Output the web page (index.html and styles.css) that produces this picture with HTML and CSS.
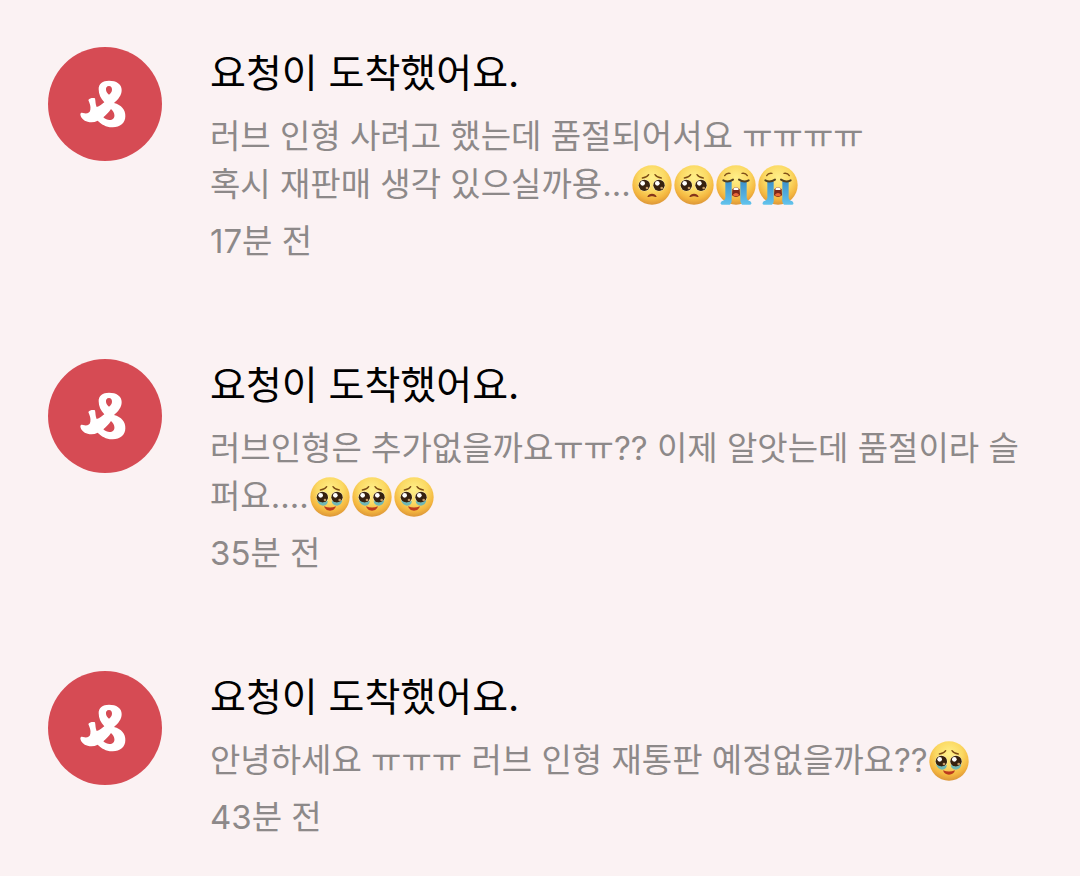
FILE: index.html
```html
<!DOCTYPE html>
<html lang="ko">
<head>
<meta charset="UTF-8">
<meta name="viewport" content="width=device-width, initial-scale=1.0">
<title>알림</title>
<link rel="stylesheet" href="styles.css">
</head>
<body>

<!-- Shared icons -->
<svg class="sprite" aria-hidden="true">
  <defs>
    <radialGradient id="face" cx="50%" cy="32%" r="68%">
      <stop offset="0" stop-color="#fff08a"/>
      <stop offset="0.5" stop-color="#fbd963"/>
      <stop offset="0.8" stop-color="#f4b63f"/>
      <stop offset="1" stop-color="#dc9638"/>
    </radialGradient>
    <linearGradient id="tear" x1="0" y1="0" x2="0" y2="1">
      <stop offset="0" stop-color="#3c91cb"/>
      <stop offset="1" stop-color="#62c3ec"/>
    </linearGradient>

    <symbol id="logo" viewBox="24 21 342 342">
      <path fill="#fff" fill-rule="evenodd" d="M176 148C175 131 188 122 207 122C229 122 245 132 245 150C245 166 235 178 222 189C244 195 257 209 256 229C256 250 239 263 216 262C198 261 184 253 173 242C163 247 153 248 143 245C131 243 121 232 121 222C123 216 129 219 133 220C143 221 150 218 151 209C153 199 149 190 145 180C150 174 158 173 165 175C167 184 166 193 170 201C178 199 187 192 193 187C182 175 176 163 176 148ZM207 138C200 138 197 144 198 150C199 156 203 161 207 164C212 160 216 155 216 149C216 143 213 138 207 138ZM213 207C206 217 198 225 190 232C198 239 207 242 215 239C227 235 226 218 213 207Z"/>
    </symbol>

    <g id="eyes">
      <circle cx="37" cy="61" r="18" fill="#fff5d0"/>
      <circle cx="81" cy="61" r="18" fill="#fff5d0"/>
      <circle cx="37" cy="61" r="17" fill="#36210f"/>
      <circle cx="81" cy="61" r="17" fill="#36210f"/>
      <circle cx="32" cy="55" r="7" fill="#fff"/>
      <circle cx="76" cy="55" r="7" fill="#fff"/>
      <circle cx="45" cy="69" r="4" fill="#c49a67"/>
      <circle cx="89" cy="69" r="4" fill="#c49a67"/>
      <path d="M31 39Q44 38 50 29M69 29Q75 38 88 39" fill="none" stroke="#7b4b14" stroke-width="4" stroke-linecap="round"/>
    </g>

    <symbol id="pleading" viewBox="0 0 120 120">
      <circle cx="60" cy="60" r="59" fill="url(#face)"/>
      <use href="#eyes"/>
      <path d="M46 95C50 83 70 83 74 95C70 98 65 94 60 94S50 98 46 95Z" fill="#85341a"/>
    </symbol>

    <symbol id="holding" viewBox="0 0 120 120">
      <circle cx="60" cy="60" r="59" fill="url(#face)"/>
      <use href="#eyes"/>
      <path d="M21 70Q37 82 53 71Q54 85 39 86Q25 85 21 70ZM65 71Q81 82 97 70Q95 85 81 86Q66 85 65 71Z" fill="#6fb7b5"/>
      <path d="M42 88Q60 95 78 88Q74 101 60 101Q46 101 42 88Z" fill="#bb391e"/>
    </symbol>

    <symbol id="sobbing" viewBox="0 0 120 120">
      <circle cx="60" cy="60" r="59" fill="url(#face)"/>
      <path d="M26 32Q31 23 42 25M78 25Q89 23 94 32" fill="none" stroke="#80501a" stroke-width="4" stroke-linecap="round"/>
      <path d="M28 49H47V102Q49 112 42 119H17Q10 117 17 109Q27 106 28 98ZM73 49H92V98Q93 106 103 109Q110 117 103 119H78Q71 112 73 102Z" fill="url(#tear)"/>
      <path d="M22 46Q36 54 51 44M69 44Q84 54 98 46" fill="none" stroke="#54401f" stroke-width="6" stroke-linecap="round"/>
      <path d="M49 73Q60 60 71 73L72 91Q60 101 48 91Z" fill="#7e2819"/>
      <path d="M52 71Q60 64 68 71L67 75H53Z" fill="#fff"/>
      <path d="M50 90Q60 78 70 90Q60 98 50 90Z" fill="#ec6a38"/>
    </symbol>
  </defs>
</svg>

<main>
  <ul class="notifications">
    <li class="notification">
      <svg class="avatar" aria-hidden="true"><use href="#logo"/></svg>
      <div class="content">
        <h2 class="title">요청이 도착했어요.</h2>
        <p class="message">러브 인형 사려고 했는데 품절되어서요 ㅠㅠㅠㅠ<br>혹시 재판매 생각 있으실까용...<svg class="emoji"><use href="#pleading"/></svg><svg class="emoji"><use href="#pleading"/></svg><svg class="emoji"><use href="#sobbing"/></svg><svg class="emoji"><use href="#sobbing"/></svg></p>
        <time class="time">17분 전</time>
      </div>
    </li>

    <li class="notification">
      <svg class="avatar" aria-hidden="true"><use href="#logo"/></svg>
      <div class="content">
        <h2 class="title">요청이 도착했어요.</h2>
        <p class="message">러브인형은 추가없을까요ㅠㅠ?? 이제 알앗는데 품절이라 슬퍼요....<svg class="emoji"><use href="#holding"/></svg><svg class="emoji"><use href="#holding"/></svg><svg class="emoji"><use href="#holding"/></svg></p>
        <time class="time">35분 전</time>
      </div>
    </li>

    <li class="notification">
      <svg class="avatar" aria-hidden="true"><use href="#logo"/></svg>
      <div class="content">
        <h2 class="title">요청이 도착했어요.</h2>
        <p class="message">안녕하세요 ㅠㅠㅠ 러브 인형 재통판 예정없을까요??<svg class="emoji"><use href="#holding"/></svg></p>
        <time class="time">43분 전</time>
      </div>
    </li>
  </ul>
</main>

</body>
</html>
```
FILE: styles.css
```css
* {
  box-sizing: border-box;
}

body {
  margin: 0;
  background-color: #fbf2f3;
  color: #000;
  font-family: Inter, "Noto Sans CJK KR", sans-serif;
}

.sprite {
  position: absolute;
  width: 0;
  height: 0;
}

.notifications {
  display: flex;
  flex-direction: column;
  gap: 94px;
  margin: 0;
  padding: 47px 48px 0;
  list-style: none;
}

.notification {
  display: flex;
  align-items: flex-start;
  gap: 48px;
}

.avatar {
  flex: none;
  width: 114px;
  height: 114px;
  border-radius: 50%;
  background-color: #d64b54;
}

.content {
  flex: 1;
  min-width: 0;
}

.title {
  margin: 0 0 13px;
  font-size: 39px;
  font-weight: 400;
  line-height: 52px;
}

.message {
  margin: 0 0 9px;
  color: #8d8989;
  font-size: 33px;
  line-height: 48px;
}

.emoji {
  width: 40px;
  height: 40px;
  margin: 0 1px;
  vertical-align: -9px;
}

.time {
  display: block;
  color: #8d8989;
  font-size: 33px;
  line-height: 48px;
}
```
